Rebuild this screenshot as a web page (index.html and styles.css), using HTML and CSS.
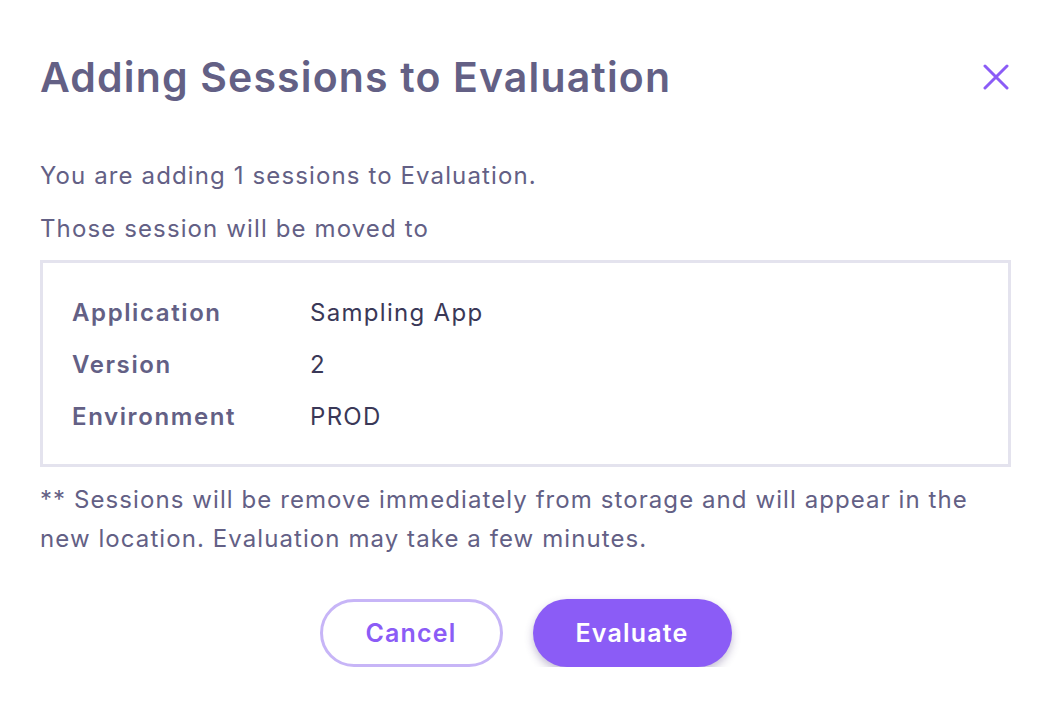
FILE: index.html
```html
<!DOCTYPE html>
<html lang="en">
<head>
<meta charset="utf-8">
<title>Adding Sessions to Evaluation</title>
<link rel="stylesheet" href="styles.css">
</head>
<body>
	<div class="dialog">
		<div class="dialog-head">
			<h1 class="dialog-title">Adding Sessions to Evaluation</h1>
			<button class="close-btn" aria-label="Close">
				<svg width="26" height="26" viewBox="0 0 26 26">
					<path d="M2 2 L24 24 M24 2 L2 24" stroke="#8b5cf6" stroke-width="3" stroke-linecap="round"/>
				</svg>
			</button>
		</div>

		<p class="intro">You are adding 1 sessions to Evaluation.</p>
		<p class="intro">Those session will be moved to</p>

		<div class="target-box">
			<div class="row">
				<span class="label">Application</span>
				<span class="value">Sampling App</span>
			</div>
			<div class="row">
				<span class="label">Version</span>
				<span class="value">2</span>
			</div>
			<div class="row">
				<span class="label">Environment</span>
				<span class="value">PROD</span>
			</div>
		</div>

		<p class="note">** Sessions will be remove immediately from storage and will appear in the new location. Evaluation may take a few minutes.</p>

		<div class="actions">
			<button class="btn btn-cancel">Cancel</button>
			<button class="btn btn-primary">Evaluate</button>
		</div>
	</div>
</body>
</html>
```

FILE: styles.css
```css
body,h1,p{
	margin:0;
	padding:0;
}
body{
	background:#fff;
	font-family:Inter,"Noto Sans",sans-serif;
	color:#636085;
}
.dialog{
	padding:52px 45px 0 40px;
}
.dialog-head{
	display:flex;
	align-items:center;
	justify-content:space-between;
	margin-bottom:59px;
}
.dialog-title{
	font-size:41px;
	font-weight:600;
	color:#636085;
	letter-spacing:1.15px;
	line-height:50px;
	white-space:nowrap;
}
.close-btn{
	border:none;
	background:none;
	padding:0;
	margin-right:2px;
	display:flex;
	cursor:pointer;
}
.intro{
	font-size:24px;
	line-height:30px;
	letter-spacing:1.12px;
	margin-bottom:23px;
}
.target-box{
	border:3px solid #e4e3ee;
	padding:24px 29px 21px;
	margin-top:-7px;
}
.row{
	display:flex;
	font-size:24px;
	line-height:52px;
	letter-spacing:1.3px;
}
.label{
	width:238px;
	font-weight:600;
	color:#636085;
	letter-spacing:1.6px;
}
.value{
	color:#3a3857;
}
.note{
	font-size:24px;
	line-height:39px;
	letter-spacing:1.08px;
	margin-top:13px;
}
.actions{
	display:flex;
	justify-content:center;
	gap:30px;
	margin-top:41px;
}
.btn{
	height:68px;
	border-radius:34px;
	font-family:inherit;
	font-size:25px;
	font-weight:600;
	letter-spacing:1.2px;
	cursor:pointer;
}
.btn-cancel{
	width:183px;
	background:#fff;
	border:3px solid #c7b5f7;
	color:#8b5cf6;
}
.btn-primary{
	width:199px;
	background:#8b5cf6;
	border:none;
	color:#fff;
	box-shadow:0 4px 8px rgba(60,40,110,0.3);
}
```
